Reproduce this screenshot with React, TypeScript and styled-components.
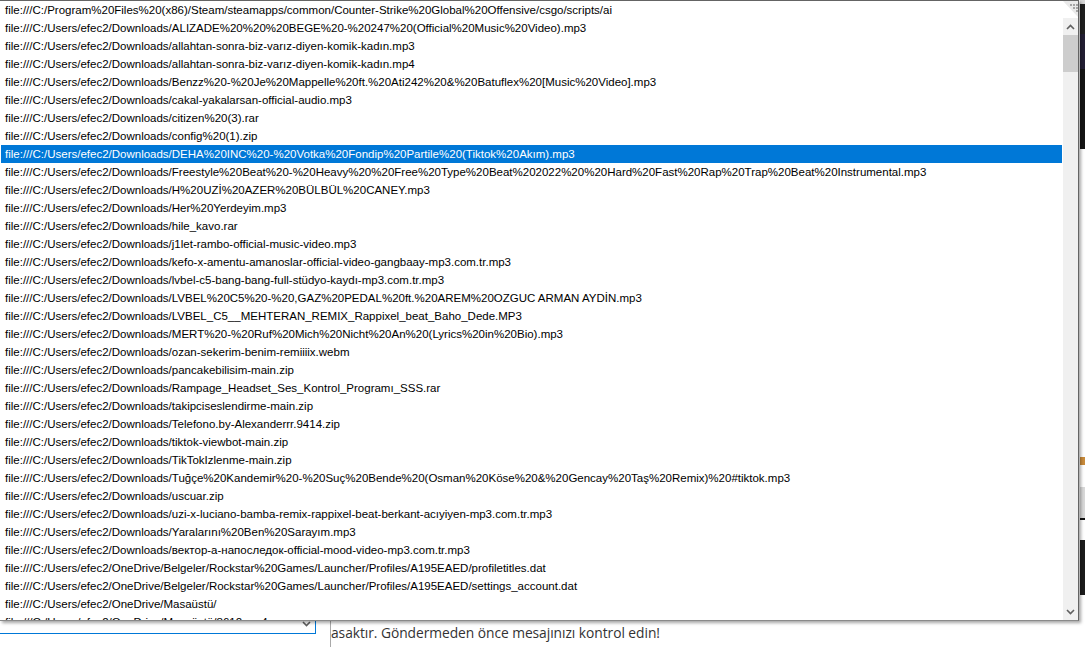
import styled, { createGlobalStyle } from 'styled-components';

const GlobalStyle = createGlobalStyle`
	html, body {
		margin: 0;
		padding: 0;
		background: #ffffff;
	}
	body {
		font-family: 'Liberation Sans', Arial, sans-serif;
	}
`;

const Page = styled.div`
	position: relative;
	width: 1085px;
	height: 647px;
	overflow: hidden;
	display: grid;
	grid-template-columns: 1fr 5px;
	background: #ffffff;
`;

const MainArea = styled.div`
	display: flex;
	flex-direction: column;
	justify-content: flex-end;
`;

const FooterRow = styled.div`
	height: 40px;
	display: flex;
	align-items: flex-start;
`;

const SelectBox = styled.div`
	box-sizing: border-box;
	width: 316px;
	height: 27px;
	border-right: 1px solid #0078d7;
	border-bottom: 1px solid #0078d7;
	display: flex;
	align-items: flex-end;
	justify-content: flex-end;
	padding: 0 4px 6px 0;
`;

const Notice = styled.div`
	margin-left: 14px;
	height: 40px;
	border-left: 1px solid #a9a9a9;
	overflow: hidden;
	padding-top: 16px;
	box-sizing: border-box;
	font-family: 'Open Sans', 'Noto Sans', sans-serif;
	font-size: 13.8px;
	letter-spacing: -0.05px;
	color: #333333;
	white-space: nowrap;
	text-indent: 0px;
`;

const SideStrip = styled.div`
	display: flex;
	flex-direction: column;
	background: #ffffff;
`;

const StripBlock = styled.div<{ $h: number; $bg: string }>`
	height: ${(p) => p.$h}px;
	background: ${(p) => p.$bg};
	flex-shrink: 0;
`;

const Popup = styled.div`
	position: absolute;
	top: 0;
	left: 0;
	box-sizing: border-box;
	width: 1079px;
	height: 621px;
	background: #ffffff;
	border-top: 1px solid #646464;
	border-right: 1px solid #646464;
	border-bottom: 1px solid #8a8a8a;
	padding-left: 1px;
	box-shadow: 2px 2px 3px rgba(0, 0, 0, 0.35);
	display: flex;
	z-index: 5;
`;

const List = styled.div`
	flex: 1;
	overflow: hidden;
`;

const Row = styled.div<{ $active?: boolean }>`
	height: 18px;
	line-height: 19px;
	padding-left: 4px;
	font-family: 'Liberation Sans', Arial, sans-serif;
	font-size: 11.5px;
	white-space: nowrap;
	color: ${(p) => (p.$active ? '#ffffff' : '#000000')};
	background: ${(p) => (p.$active ? '#0078d7' : 'transparent')};
`;

const ScrollBar = styled.div`
	width: 15px;
	margin-left: 1px;
	display: flex;
	flex-direction: column;
	background: #f0f0f0;
`;

const Grip = styled.div`
	height: 17px;
	background: #ffffff;
`;

const ArrowButton = styled.div`
	height: 17px;
	display: flex;
	align-items: center;
	justify-content: center;
`;

const Track = styled.div`
	flex: 1;
`;

const Thumb = styled.div`
	height: 37px;
	background: #cdcdcd;
`;

const files = [
	'file:///C:/Program%20Files%20(x86)/Steam/steamapps/common/Counter-Strike%20Global%20Offensive/csgo/scripts/ai',
	'file:///C:/Users/efec2/Downloads/ALIZADE%20%20%20BEGE%20-%20247%20(Official%20Music%20Video).mp3',
	'file:///C:/Users/efec2/Downloads/allahtan-sonra-biz-varız-diyen-komik-kadın.mp3',
	'file:///C:/Users/efec2/Downloads/allahtan-sonra-biz-varız-diyen-komik-kadın.mp4',
	'file:///C:/Users/efec2/Downloads/Benzz%20-%20Je%20Mappelle%20ft.%20Ati242%20&%20Batuflex%20[Music%20Video].mp3',
	'file:///C:/Users/efec2/Downloads/cakal-yakalarsan-official-audio.mp3',
	'file:///C:/Users/efec2/Downloads/citizen%20(3).rar',
	'file:///C:/Users/efec2/Downloads/config%20(1).zip',
	'file:///C:/Users/efec2/Downloads/DEHA%20INC%20-%20Votka%20Fondip%20Partile%20(Tiktok%20Akım).mp3',
	'file:///C:/Users/efec2/Downloads/Freestyle%20Beat%20-%20Heavy%20%20Free%20Type%20Beat%202022%20%20Hard%20Fast%20Rap%20Trap%20Beat%20Instrumental.mp3',
	'file:///C:/Users/efec2/Downloads/H%20UZİ%20AZER%20BÜLBÜL%20CANEY.mp3',
	'file:///C:/Users/efec2/Downloads/Her%20Yerdeyim.mp3',
	'file:///C:/Users/efec2/Downloads/hile_kavo.rar',
	'file:///C:/Users/efec2/Downloads/j1let-rambo-official-music-video.mp3',
	'file:///C:/Users/efec2/Downloads/kefo-x-amentu-amanoslar-official-video-gangbaay-mp3.com.tr.mp3',
	'file:///C:/Users/efec2/Downloads/lvbel-c5-bang-bang-full-stüdyo-kaydı-mp3.com.tr.mp3',
	'file:///C:/Users/efec2/Downloads/LVBEL%20C5%20-%20,GAZ%20PEDAL%20ft.%20AREM%20OZGUC  ARMAN AYDİN.mp3',
	'file:///C:/Users/efec2/Downloads/LVBEL_C5__MEHTERAN_REMIX_Rappixel_beat_Baho_Dede.MP3',
	'file:///C:/Users/efec2/Downloads/MERT%20-%20Ruf%20Mich%20Nicht%20An%20(Lyrics%20in%20Bio).mp3',
	'file:///C:/Users/efec2/Downloads/ozan-sekerim-benim-remiiiix.webm',
	'file:///C:/Users/efec2/Downloads/pancakebilisim-main.zip',
	'file:///C:/Users/efec2/Downloads/Rampage_Headset_Ses_Kontrol_Programı_SSS.rar',
	'file:///C:/Users/efec2/Downloads/takipciseslendirme-main.zip',
	'file:///C:/Users/efec2/Downloads/Telefono.by-Alexanderrr.9414.zip',
	'file:///C:/Users/efec2/Downloads/tiktok-viewbot-main.zip',
	'file:///C:/Users/efec2/Downloads/TikTokIzlenme-main.zip',
	'file:///C:/Users/efec2/Downloads/Tuğçe%20Kandemir%20-%20Suç%20Bende%20(Osman%20Köse%20&%20Gencay%20Taş%20Remix)%20#tiktok.mp3',
	'file:///C:/Users/efec2/Downloads/uscuar.zip',
	'file:///C:/Users/efec2/Downloads/uzi-x-luciano-bamba-remix-rappixel-beat-berkant-acıyiyen-mp3.com.tr.mp3',
	'file:///C:/Users/efec2/Downloads/Yaralarını%20Ben%20Sarayım.mp3',
	'file:///C:/Users/efec2/Downloads/вектор-а-напоследок-official-mood-video-mp3.com.tr.mp3',
	'file:///C:/Users/efec2/OneDrive/Belgeler/Rockstar%20Games/Launcher/Profiles/A195EAED/profiletitles.dat',
	'file:///C:/Users/efec2/OneDrive/Belgeler/Rockstar%20Games/Launcher/Profiles/A195EAED/settings_account.dat',
	'file:///C:/Users/efec2/OneDrive/Masaüstü/',
	'file:///C:/Users/efec2/OneDrive/Masaüstü/8612.mp4',
];

const ACTIVE = 8;

function Chevron({ down }: { down?: boolean }) {
	return (
		<svg width="9" height="6" viewBox="0 0 9 6">
			<path
				d={down ? 'M1 1 L4.5 4.5 L8 1' : 'M1 5 L4.5 1.5 L8 5'}
				fill="none"
				stroke="#606060"
				strokeWidth="1.6"
			/>
		</svg>
	);
}

function GripIcon() {
	return (
		<svg width="15" height="17" viewBox="0 0 15 17">
			<polygon points="0,0 15,0 15,16" fill="#e9e9e9" />
			<rect x="7" y="3" width="2" height="2" fill="#a4a4a4" />
			<rect x="10" y="3" width="2" height="2" fill="#a4a4a4" />
			<rect x="13" y="3" width="2" height="2" fill="#a4a4a4" />
			<rect x="10" y="6" width="2" height="2" fill="#a4a4a4" />
			<rect x="13" y="6" width="2" height="2" fill="#a4a4a4" />
			<rect x="13" y="9" width="2" height="2" fill="#a4a4a4" />
		</svg>
	);
}

function App() {
	return (
		<>
			<GlobalStyle />
			<Page>
				<MainArea>
					<FooterRow>
						<SelectBox>
							<Chevron down />
						</SelectBox>
						<Notice>asaktır. Göndermeden önce mesajınızı kontrol edin!</Notice>
					</FooterRow>
				</MainArea>
				<SideStrip>
					<StripBlock $h={4} $bg="#d6d6d6" />
					<StripBlock $h={30} $bg="#1f1f1f" />
					<StripBlock $h={35} $bg="#221e33" />
					<StripBlock $h={80} $bg="#151515" />
					<StripBlock $h={308} $bg="#ffffff" />
					<StripBlock $h={8} $bg="#c98b3a" />
					<StripBlock $h={22} $bg="#ffffff" />
					<StripBlock $h={31} $bg="#d9d9d9" />
					<StripBlock $h={2} $bg="#111111" />
					<StripBlock $h={20} $bg="#ffffff" />
					<StripBlock $h={55} $bg="#1c1c1c" />
				</SideStrip>

				<Popup>
					<List>
						{files.map((f, i) => (
							<Row key={i} $active={i === ACTIVE}>
								{f}
							</Row>
						))}
					</List>
					<ScrollBar>
						<Grip>
							<GripIcon />
						</Grip>
						<ArrowButton>
							<Chevron />
						</ArrowButton>
						<Track>
							<Thumb />
						</Track>
						<ArrowButton>
							<Chevron down />
						</ArrowButton>
					</ScrollBar>
				</Popup>
			</Page>
		</>
	);
}

export default App;
